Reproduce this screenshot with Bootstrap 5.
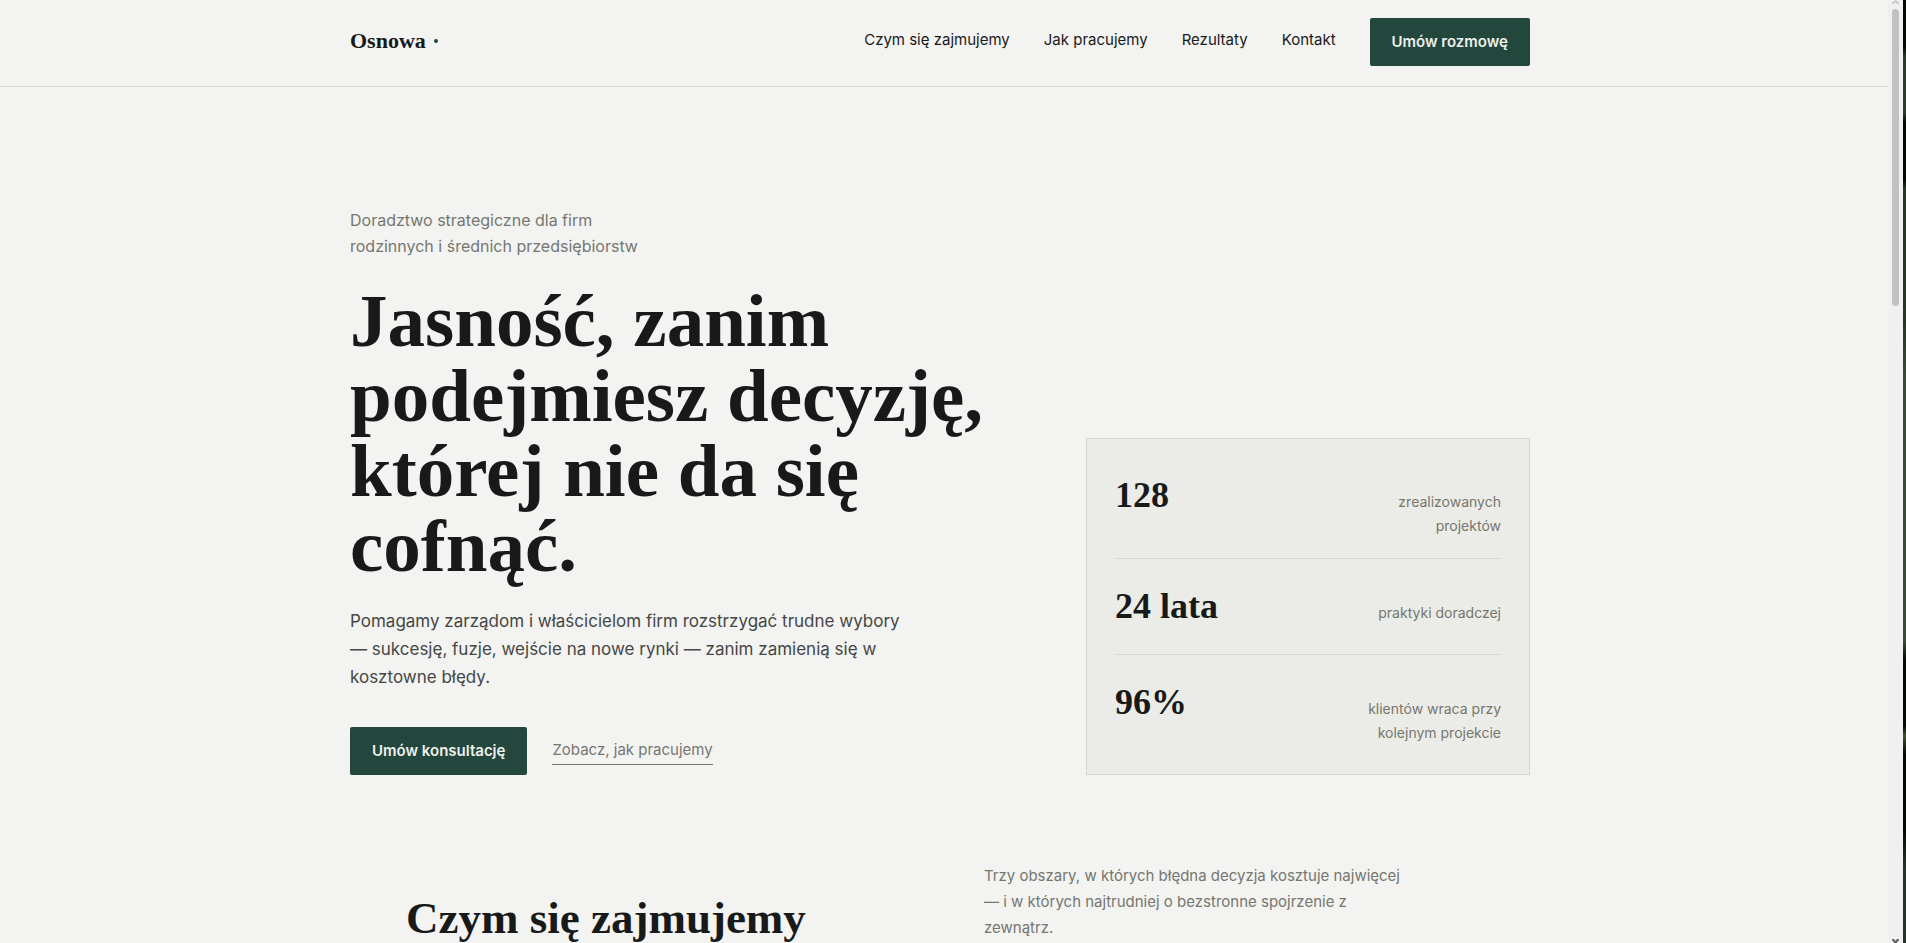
<!DOCTYPE html>
<html lang="pl">
<head>
<meta charset="utf-8">
<meta name="viewport" content="width=device-width, initial-scale=1">
<title>Osnowa</title>
<link href="https://cdn.jsdelivr.net/npm/bootstrap@5.3.0/dist/css/bootstrap.min.css" rel="stylesheet">
<style>
:root{--ink:#181a19;--soft:#454745;--muted:#757770;--green:#23463d;--paper:#f3f3f1;--panel:#ebece7;--rule:#d5d7d2}
body{font-family:Inter,"Liberation Sans",sans-serif;font-size:16px;line-height:26px;background:var(--paper);color:var(--ink)}
.serif{font-family:"Liberation Serif",serif;font-weight:700}
.page-view{min-width:0}
.topbar,.content{padding-right:8px}
.topbar{border-bottom:1px solid var(--rule);padding-top:18px;padding-bottom:20px}
.shell{max-width:1180px}
.brand{font-size:22px;line-height:26px;color:var(--ink);padding-bottom:2px}
.brand-dot{width:4px;height:4px;background:var(--green);margin-left:8px}
.topnav{gap:34px;font-size:15px;line-height:24px}
.topnav a{color:var(--ink);padding-bottom:4px}
.btn-green{--bs-btn-bg:var(--green);--bs-btn-color:#eef0ec;--bs-btn-hover-bg:#1a362f;--bs-btn-hover-color:#fff;--bs-btn-border-width:0;--bs-btn-padding-x:22px;--bs-btn-padding-y:12px;--bs-btn-font-size:15px;--bs-btn-font-weight:600;--bs-btn-line-height:24px;--bs-btn-border-radius:2px;white-space:nowrap}
.hero{padding-top:120px}
.eyebrow{color:var(--muted)}
.hero h1{font-size:75px;line-height:75px;margin:24px 0 24px}
.intro{font-size:17px;line-height:28px;color:var(--soft);margin-bottom:36px}
.more-link{font-size:15px;line-height:24px;color:var(--muted);border-bottom:1px solid var(--muted);padding-bottom:2px;margin-left:25px}
.stats{width:444px;background:var(--panel);border:1px solid var(--rule);padding:9px 28px}
.stat-row{padding:20px 0}
.stat-row + .stat-row{border-top:1px solid var(--rule)}
.stat-num{font-size:36px;line-height:55px}
.stat-label{font-size:14px;line-height:24px;color:var(--muted)}
.areas{padding:88px 56px 0}
.areas .row{--bs-gutter-x:88px}
.areas h2{font-size:45px;line-height:46px}
.areas p{font-size:15px;color:var(--muted)}
.track{width:15px;background:#f0f0f1;padding:0 3px 0 4px}
.thumb{width:7px;height:297px;border-radius:4px;background:#c1c1c1;margin-top:5px}
.edge{width:3px;background:linear-gradient(#050805 0 5%,#2c3a2c 6% 12%,#030603 13% 19%,#263526 20% 34%,#394b35 40% 68%,#050805 70% 77%,#42502f 78%,#050805 80% 88%,#26332a 92%)}
</style>
<script src="https://cdn.jsdelivr.net/npm/bootstrap@5.3.0/dist/js/bootstrap.bundle.min.js"></script>
</head>
<body>
<div class="d-flex vh-100 overflow-hidden">
  <div class="page-view flex-grow-1 overflow-hidden">
    <header class="topbar">
      <div class="shell mx-auto d-flex align-items-center justify-content-between">
        <a href="#" class="brand serif text-decoration-none d-flex align-items-center">Osnowa<span class="brand-dot rounded-circle"></span></a>
        <nav class="topnav d-flex align-items-center">
          <a class="text-decoration-none" href="#uslugi">Czym się zajmujemy</a>
          <a class="text-decoration-none" href="#proces">Jak pracujemy</a>
          <a class="text-decoration-none" href="#rezultaty">Rezultaty</a>
          <a class="text-decoration-none" href="#kontakt">Kontakt</a>
          <button type="button" class="btn btn-green">Umów rozmowę</button>
        </nav>
      </div>
    </header>
    <main class="content">
      <section class="hero shell mx-auto d-flex align-items-end justify-content-between">
        <div>
          <p class="eyebrow mb-0">Doradztwo strategiczne dla firm<br>rodzinnych i średnich przedsiębiorstw</p>
          <h1 class="serif">Jasność, zanim<br>podejmiesz decyzję,<br>której nie da się<br>cofnąć.</h1>
          <p class="intro">Pomagamy zarządom i właścicielom firm rozstrzygać trudne wybory<br>— sukcesję, fuzje, wejście na nowe rynki — zanim zamienią się w<br>kosztowne błędy.</p>
          <div class="d-flex align-items-center">
            <button type="button" class="btn btn-green">Umów konsultację</button>
            <a href="#proces" class="more-link text-decoration-none">Zobacz, jak pracujemy</a>
          </div>
        </div>
        <div class="stats flex-shrink-0">
          <div class="stat-row d-flex justify-content-between align-items-baseline">
            <div class="stat-num serif">128</div>
            <div class="stat-label text-end">zrealizowanych<br>projektów</div>
          </div>
          <div class="stat-row d-flex justify-content-between align-items-baseline">
            <div class="stat-num serif">24 lata</div>
            <div class="stat-label text-end">praktyki doradczej</div>
          </div>
          <div class="stat-row d-flex justify-content-between align-items-baseline">
            <div class="stat-num serif">96%</div>
            <div class="stat-label text-end">klientów wraca przy<br>kolejnym projekcie</div>
          </div>
        </div>
      </section>
      <section class="areas shell mx-auto" id="uslugi">
        <div class="row align-items-end">
          <div class="col-6"><h2 class="serif mb-0">Czym się zajmujemy</h2></div>
          <div class="col-6"><p class="mb-0">Trzy obszary, w których błędna decyzja kosztuje najwięcej<br>— i w których najtrudniej o bezstronne spojrzenie z<br>zewnątrz.</p></div>
        </div>
      </section>
    </main>
  </div>
  <div class="track flex-shrink-0 d-flex flex-column justify-content-between" aria-hidden="true">
    <div>
      <svg class="d-block" width="7" height="4" viewBox="0 0 7 4"><path d="M0 4V3L3.500 0L7 3V4H5.500L3.500 2L1.500 4Z" fill="#c1c1c1"/></svg>
      <div class="thumb"></div>
    </div>
    <svg class="d-block" width="7" height="4" viewBox="0 0 7 4"><path d="M0 0H2L3.500 2L5 0H7V1L4.500 4H2.500L0 1Z" fill="#606060"/></svg>
  </div>
  <div class="edge flex-shrink-0" aria-hidden="true"></div>
</div>
</body>
</html>
